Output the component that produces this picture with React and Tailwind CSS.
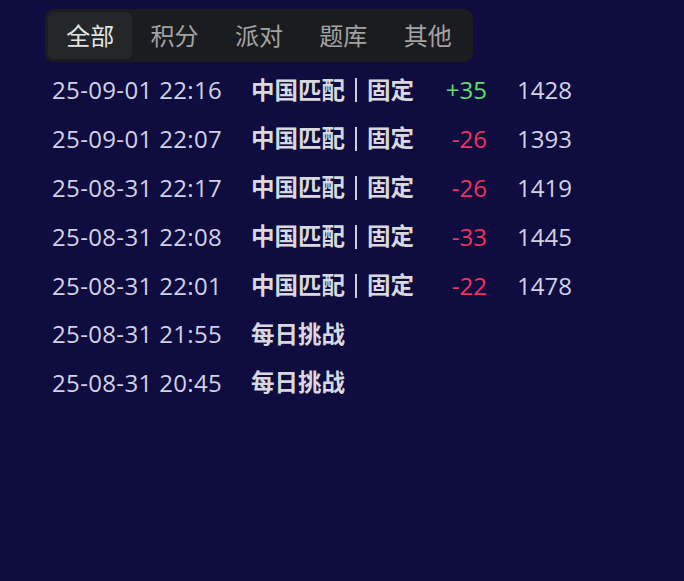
import React, { useState } from "react";

const tabs = ["全部", "积分", "派对", "题库", "其他"];

const records = [
  { time: "25-09-01 22:16", title: "中国匹配", mode: "固定", delta: 35, score: 1428 },
  { time: "25-09-01 22:07", title: "中国匹配", mode: "固定", delta: -26, score: 1393 },
  { time: "25-08-31 22:17", title: "中国匹配", mode: "固定", delta: -26, score: 1419 },
  { time: "25-08-31 22:08", title: "中国匹配", mode: "固定", delta: -33, score: 1445 },
  { time: "25-08-31 22:01", title: "中国匹配", mode: "固定", delta: -22, score: 1478 },
  { time: "25-08-31 21:55", title: "每日挑战" },
  { time: "25-08-31 20:45", title: "每日挑战" },
];

function App() {
  const [active, setActive] = useState(0);

  return (
    <div
      className="min-h-[581px] w-full bg-[#0f0c40] pt-[9px] pl-[45px]"
      style={{ fontFamily: '"Open Sans", "Noto Sans CJK SC", sans-serif' }}
    >
      {/* Tabs */}
      <div className="inline-flex rounded-[9px] bg-[#1b1c1f] p-[3px]">
        {tabs.map((t, i) => (
          <button
            key={t}
            onClick={() => setActive(i)}
            className={
              "h-[47px] w-[84.4px] rounded-[6px] text-[24px] leading-none " +
              (i === active ? "bg-[#24272a] text-[#e4e4e4]" : "text-[#a3a3a3]")
            }
          >
            {t}
          </button>
        ))}
      </div>

      {/* Records */}
      <div className="mt-[4px] pl-[7px]">
        {records.map((r, i) => (
          <div key={i} className="flex h-[48.8px] items-center text-[24px] leading-none">
            <span className="w-[199px] shrink-0 tracking-[0.35px] text-[#d3d1e4]">{r.time}</span>
            <span className="flex w-[168px] shrink-0 items-center whitespace-nowrap text-[23.5px] font-bold text-[#d9d8de]">
              {r.title}
              {r.mode && (
                <>
                  <span className="mx-[10px] h-[24px] w-[2px] shrink-0 bg-[#cfced6]" />
                  {r.mode}
                </>
              )}
            </span>
            {r.delta !== undefined && (
              <>
                <span
                  className={
                    "w-[68px] shrink-0 text-right " +
                    (r.delta > 0 ? "text-[#5fe06c]" : "text-[#f2305c]")
                  }
                >
                  {r.delta > 0 ? "+" + r.delta : r.delta}
                </span>
                <span className="ml-[30px] text-[#d3d1e4]">{r.score}</span>
              </>
            )}
          </div>
        ))}
      </div>
    </div>
  );
}

export default App;
